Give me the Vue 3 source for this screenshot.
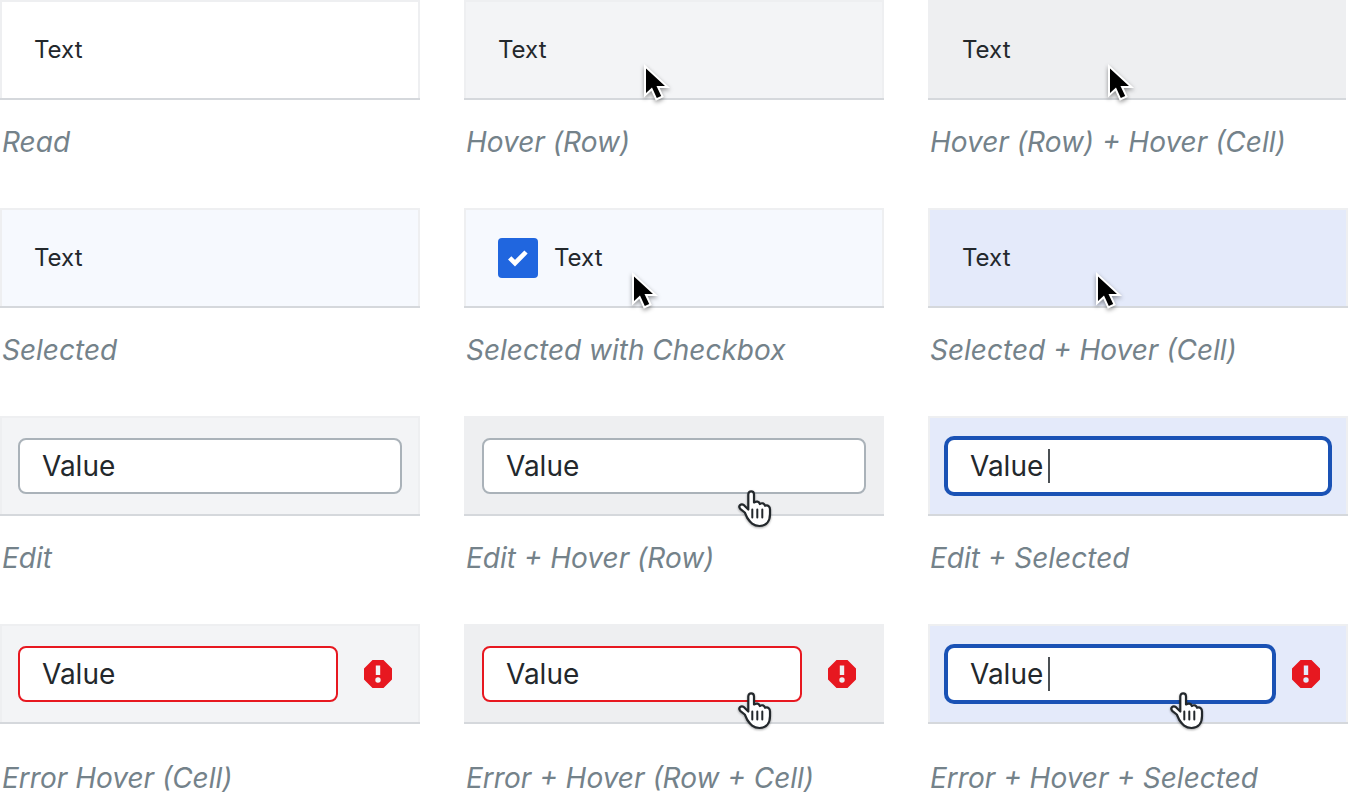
<script setup>
const states = [
  { id: 'read', caption: 'Read', tone: 'plain', text: 'Text' },
  { id: 'hover-row', caption: 'Hover (Row)', tone: 'soft', text: 'Text', cursor: 'arrow' },
  { id: 'hover-cell', caption: 'Hover (Row) + Hover (Cell)', tone: 'muted open', text: 'Text', cursor: 'arrow' },
  { id: 'selected', caption: 'Selected', tone: 'picked', text: 'Text' },
  { id: 'selected-check', caption: 'Selected with Checkbox', tone: 'picked', text: 'Text', check: true, cursor: 'arrow near' },
  { id: 'selected-hover', caption: 'Selected + Hover (Cell)', tone: 'active', text: 'Text', cursor: 'arrow near' },
  { id: 'edit', caption: 'Edit', tone: 'soft', field: 'normal' },
  { id: 'edit-hover', caption: 'Edit + Hover (Row)', tone: 'muted', field: 'normal', cursor: 'hand low' },
  { id: 'edit-selected', caption: 'Edit + Selected', tone: 'active', field: 'focused' },
  { id: 'error', caption: 'Error Hover (Cell)', tone: 'soft', field: 'invalid', error: true },
  { id: 'error-hover', caption: 'Error + Hover (Row + Cell)', tone: 'muted', field: 'invalid', error: true, cursor: 'hand' },
  { id: 'error-selected', caption: 'Error + Hover + Selected', tone: 'active', field: 'focused', error: true, cursor: 'hand near' },
]
</script>

<template>
  <main class="states">
    <figure v-for="s in states" :key="s.id" class="state" :class="{ roomy: s.error }">
      <div class="cell" :class="[s.tone, { editing: s.field }]">
        <template v-if="s.field">
          <div class="field" :class="s.field">
            <input type="text" value="Value" :aria-labelledby="s.id" :aria-invalid="s.error ? 'true' : 'false'" />
            <span v-if="s.field === 'focused'" class="caret"></span>
          </div>
          <svg v-if="s.error" class="alert" viewBox="0 0 28 28" role="img" aria-label="Error">
            <path
              fill="#e71820"
              fill-rule="evenodd"
              d="M8.5 0h11L28 8.500v11L19.500 28h-11L0 19.500v-11zM11.800 5.500v9.500h4.400V5.500zM14 17.300a2.700 2.700 0 1 0 0 5.400a2.700 2.700 0 0 0 0-5.400z"
            />
          </svg>
        </template>
        <label v-else-if="s.check" class="choice">
          <span class="box">
            <input type="checkbox" checked />
            <svg viewBox="0 0 40 40" aria-hidden="true">
              <path d="M11.700 19.800L17 25.200L28 14" fill="none" stroke="#fff" stroke-width="4.600" />
            </svg>
          </span>
          <span>{{ s.text }}</span>
        </label>
        <span v-else>{{ s.text }}</span>

        <svg v-if="s.cursor && s.cursor.startsWith('arrow')" class="cursor" :class="s.cursor" viewBox="0 0 28 38" aria-hidden="true">
          <path
            d="M2 4.500V29L8 23.500L12.800 34L17.200 32L12.500 22H21z"
            fill="#000"
            stroke="#fff"
            stroke-width="4"
            stroke-linejoin="miter"
            paint-order="stroke"
          />
        </svg>
        <svg v-else-if="s.cursor" class="cursor" :class="s.cursor" viewBox="0 0 34 38" aria-hidden="true">
          <path
            d="M10.300 19.500V4.500C10.300 0.300 16 0.300 16 4.500V12.500C18.500 10.800 21 11.500 21.800 14C24 12.500 26.300 13.300 27 15.800C30 14.700 32 16.500 32 19.500V24C32 31 28.500 36 21.500 36C15 36 12.500 32.500 9.300 28L6.800 22.500L2.200 18.800C-0.200 16 3 13 6 15.200z"
            fill="#fff"
            stroke="#23282c"
            stroke-width="2.200"
            stroke-linejoin="round"
          />
          <path d="M14.300 19.500v8M19.300 19.500v8M24.300 19.500v8" stroke="#23282c" stroke-width="2" stroke-linecap="round" />
        </svg>
      </div>
      <figcaption :id="s.id">{{ s.caption }}</figcaption>
    </figure>
  </main>
</template>

<style>
body {
  margin: 0;
  background: #fff;
}
</style>

<style scoped>
.states {
  display: grid;
  grid-template-columns: repeat(3, minmax(0, 1fr));
  gap: 50px 44px;
  font-family: Inter, "Liberation Sans", sans-serif;
  font-optical-sizing: none;
  color: #23282c;
}
.state {
  margin: 0;
}
.cell {
  position: relative;
  box-sizing: border-box;
  display: flex;
  align-items: center;
  height: 100px;
  padding: 0 34px;
  border: 0 solid #eeeff1;
  border-width: 2px 0;
  border-bottom-color: #d5d8dc;
  box-shadow: inset 2px 0 #eeeff1, inset -2px 0 #eeeff1;
  font-size: 24px;
  line-height: 32px;
}
.cell.editing {
  padding: 0 18px;
}
.plain {
  background: #fff;
}
.soft {
  background: #f3f4f6;
}
.muted {
  background: #eeeff1;
}
.open {
  margin-right: 2px;
}
.picked {
  background: #f6f9fe;
}
.active {
  background: #e4eafa;
}
figcaption {
  margin-top: 26px;
  padding-left: 2px;
  font-size: 28px;
  line-height: 32px;
  font-style: italic;
  color: #74828a;
}
.roomy figcaption {
  margin-top: 38px;
}
.field {
  position: relative;
  flex: 1;
  min-width: 0;
}
.field input {
  display: block;
  box-sizing: border-box;
  width: 100%;
  height: 56px;
  margin: 0;
  padding: 0 22px;
  border: 2px solid #aab2b9;
  border-radius: 8px;
  outline: 0;
  background: #fff;
  color: #23282c;
  font: inherit;
  font-size: 28px;
  font-optical-sizing: none;
}
.invalid input {
  border-color: #e71820;
}
.focused input {
  border-color: #1a52b5;
  box-shadow: 0 0 0 2px #1a52b5;
}
.caret {
  position: absolute;
  top: 11px;
  left: 102px;
  width: 2px;
  height: 34px;
  background: #4b5054;
}
.alert {
  flex: none;
  width: 28px;
  height: 28px;
  margin: 0 10px 0 26px;
}
.focused + .alert {
  margin-left: 18px;
}
.choice {
  display: flex;
  align-items: center;
  gap: 16px;
}
.box {
  position: relative;
  width: 40px;
  height: 40px;
}
.box input {
  appearance: none;
  display: block;
  width: 40px;
  height: 40px;
  margin: 0;
  border-radius: 4px;
  background: #2066df;
}
.box svg {
  position: absolute;
  inset: 0;
  pointer-events: none;
}
.cursor {
  position: absolute;
  z-index: 1;
  overflow: visible;
  pointer-events: none;
}
.arrow {
  top: 62px;
  left: 180px;
  width: 28px;
  height: 38px;
  filter: drop-shadow(0 2px 2px rgb(0 0 0 / 40%));
}
.arrow.near {
  left: 168px;
}
.hand {
  top: 66px;
  left: 274px;
  width: 34px;
  height: 38px;
  filter: drop-shadow(0 1px 1px rgb(0 0 0 / 35%));
}
.hand.low {
  top: 72px;
}
.hand.near {
  left: 242px;
}
</style>
